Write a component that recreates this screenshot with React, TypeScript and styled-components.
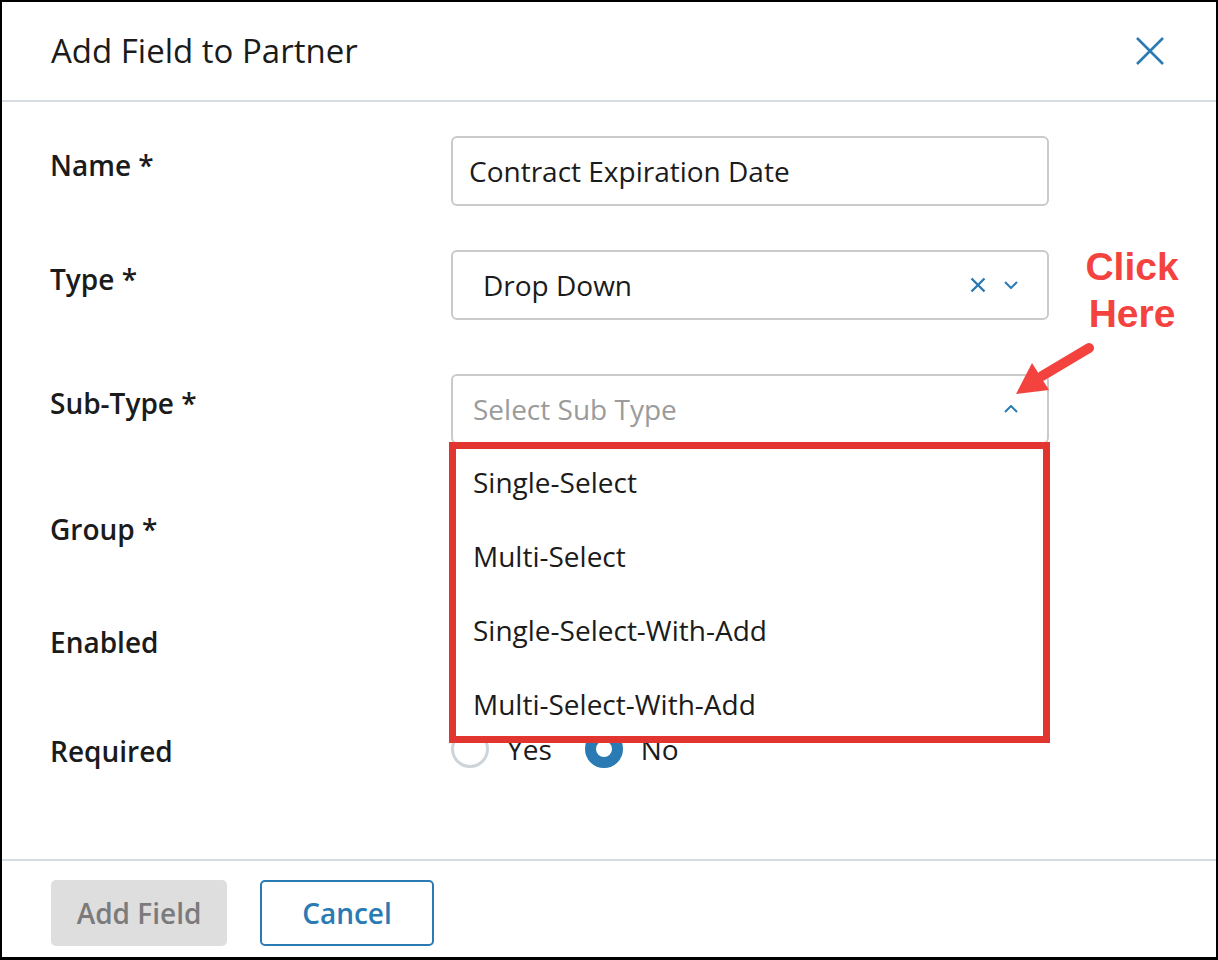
import styled, { createGlobalStyle } from 'styled-components';

const GlobalStyle = createGlobalStyle`
  html, body {
    margin: 0;
    padding: 0;
    background: #fff;
  }
  body {
    font-family: 'Open Sans', 'Noto Sans', sans-serif;
    color: #1b1b1b;
  }
  * {
    box-sizing: border-box;
  }
`;

const BLUE = '#2a7ab3';

const Frame = styled.div`
  position: relative;
  width: 1218px;
  height: 960px;
  border: 2px solid #000;
  border-bottom-width: 3px;
  display: flex;
  flex-direction: column;
  background: #fff;
`;

const Header = styled.header`
  flex: none;
  height: 100px;
  display: flex;
  align-items: center;
  justify-content: space-between;
  padding: 0 52px 0 49px;
  border-bottom: 2px solid #d6dce1;
`;

const Title = styled.h1`
  margin: 0;
  font-size: 33px;
  font-weight: 500;
  line-height: 44px;
  color: #1b1b1b;
`;

const CloseButton = styled.button`
  display: flex;
  padding: 0;
  border: none;
  background: none;
  color: ${BLUE};
  cursor: pointer;
`;

const Body = styled.main`
  flex: 1;
  padding: 34px 0 0 48px;
`;

const Row = styled.div<{ $h?: number }>`
  display: grid;
  grid-template-columns: 401px 598px;
  height: ${(p) => (p.$h ? `${p.$h}px` : 'auto')};
`;

const Label = styled.label`
  padding-top: 10px;
  font-size: 28px;
  font-weight: 600;
  line-height: 38px;
`;

const Field = styled.div<{ $pad: number }>`
  position: relative;
  height: 70px;
  display: flex;
  align-items: center;
  padding: 0 29px 0 ${(p) => p.$pad}px;
  border: 2px solid #cacaca;
  border-radius: 6px;
  font-size: 28px;
  line-height: 38px;
  background: #fff;
`;

const Value = styled.span<{ $placeholder?: boolean }>`
  flex: 1;
  color: ${(p) => (p.$placeholder ? '#9b9b9b' : '#1b1b1b')};
`;

const Icons = styled.div`
  display: flex;
  align-items: center;
  margin-left: auto;
  gap: 18px;
  color: ${BLUE};
`;

const Menu = styled.ul`
  position: absolute;
  z-index: 10;
  top: 66px;
  left: -4px;
  right: -3px;
  height: 301px;
  margin: 0;
  padding: 0;
  list-style: none;
  background: #fff;
  border: 7px solid #e2352f;
  overflow: hidden;
`;

const MenuItem = styled.li`
  height: 74px;
  padding: 14px 0 0 17px;
  font-size: 28px;
  line-height: 38px;
  color: #1b1b1b;
`;

const Toggle = styled.div`
  margin-top: 6px;
  width: 70px;
  height: 38px;
  border-radius: 19px;
  background: ${BLUE};
`;

const RadioGroup = styled.div`
  display: flex;
  align-items: center;
  gap: 33px;
  margin-top: 8px;
  height: 38px;
`;

const RadioOption = styled.label`
  display: flex;
  align-items: center;
  gap: 18px;
  font-size: 28px;
  line-height: 38px;
`;

const RadioCircle = styled.span<{ $checked?: boolean }>`
  width: 38px;
  height: 38px;
  border-radius: 50%;
  background: #fff;
  border: ${(p) => (p.$checked ? `11px solid ${BLUE}` : '3px solid #cdd4da')};
`;

const Footer = styled.footer`
  flex: none;
  height: 98px;
  display: flex;
  align-items: flex-start;
  gap: 33px;
  padding: 19px 0 0 49px;
  border-top: 2px solid #d6dce1;
`;

const Button = styled.button<{ $variant: 'disabled' | 'outline' }>`
  height: 66px;
  width: ${(p) => (p.$variant === 'disabled' ? 176 : 174)}px;
  border-radius: 5px;
  font-family: inherit;
  font-size: 28px;
  font-weight: 600;
  background: ${(p) => (p.$variant === 'disabled' ? '#dedede' : '#fff')};
  color: ${(p) => (p.$variant === 'disabled' ? '#7b7b7b' : BLUE)};
  border: ${(p) => (p.$variant === 'disabled' ? 'none' : `2px solid ${BLUE}`)};
`;

const Callout = styled.div`
  position: absolute;
  top: 241px;
  left: 1075px;
  width: 110px;
  text-align: center;
  font-family: 'Liberation Sans', Arial, sans-serif;
  font-weight: 700;
  font-size: 39px;
  line-height: 47px;
  color: #f4433f;
`;

const ArrowSvg = styled.svg`
  position: absolute;
  top: 328px;
  left: 998px;
`;

const CloseIcon = () => (
  <svg width="28" height="28" viewBox="0 0 28 28" fill="none" stroke="currentColor" strokeWidth="2.6">
    <path d="M1 1L27 27M27 1L1 27" />
  </svg>
);

const ClearIcon = () => (
  <svg width="16" height="16" viewBox="0 0 16 16" fill="none" stroke="currentColor" strokeWidth="2.4">
    <path d="M1.5 1.5L14.5 14.5M14.5 1.5L1.5 14.5" />
  </svg>
);

const Chevron = ({ up }: { up?: boolean }) => (
  <svg width="14" height="8" viewBox="0 0 14 8" fill="none" stroke="currentColor" strokeWidth="2">
    <path d={up ? 'M1 7L7 1L13 7' : 'M1 1L7 7L13 1'} />
  </svg>
);

const options = ['Single-Select', 'Multi-Select', 'Single-Select-With-Add', 'Multi-Select-With-Add'];

export default function App() {
  return (
    <>
      <GlobalStyle />
      <Frame>
        <Header>
          <Title>Add Field to Partner</Title>
          <CloseButton aria-label="Close">
            <CloseIcon />
          </CloseButton>
        </Header>

        <Body>
          <Row $h={114}>
            <Label>Name *</Label>
            <Field $pad={16}>
              <Value>Contract Expiration Date</Value>
            </Field>
          </Row>

          <Row $h={124}>
            <Label>Type *</Label>
            <Field $pad={30}>
              <Value>Drop Down</Value>
              <Icons>
                <ClearIcon />
                <Chevron />
              </Icons>
            </Field>
          </Row>

          <Row $h={126}>
            <Label>Sub-Type *</Label>
            <Field $pad={20}>
              <Value $placeholder>Select Sub Type</Value>
              <Icons>
                <Chevron up />
              </Icons>
              <Menu>
                {options.map((o) => (
                  <MenuItem key={o}>{o}</MenuItem>
                ))}
              </Menu>
            </Field>
          </Row>

          {/* group select sits under the open menu */}
          <Row $h={113}>
            <Label>Group *</Label>
            <Field $pad={20}>
              <Icons>
                <Chevron />
              </Icons>
            </Field>
          </Row>

          <Row $h={109}>
            <Label>Enabled</Label>
            <Toggle />
          </Row>

          <Row>
            <Label>Required</Label>
            <RadioGroup>
              <RadioOption>
                <RadioCircle />
                Yes
              </RadioOption>
              <RadioOption>
                <RadioCircle $checked />
                No
              </RadioOption>
            </RadioGroup>
          </Row>
        </Body>

        <Footer>
          <Button $variant="disabled">Add Field</Button>
          <Button $variant="outline">Cancel</Button>
        </Footer>

        <Callout>
          Click
          <br />
          Here
        </Callout>
        <ArrowSvg width="100" height="70" viewBox="0 0 100 70">
          <line x1="89" y1="18" x2="42" y2="46" stroke="#f4433f" strokeWidth="10" strokeLinecap="round" />
          <polygon points="16,64 32,33 49,60" fill="#f4433f" />
        </ArrowSvg>
      </Frame>
    </>
  );
}
